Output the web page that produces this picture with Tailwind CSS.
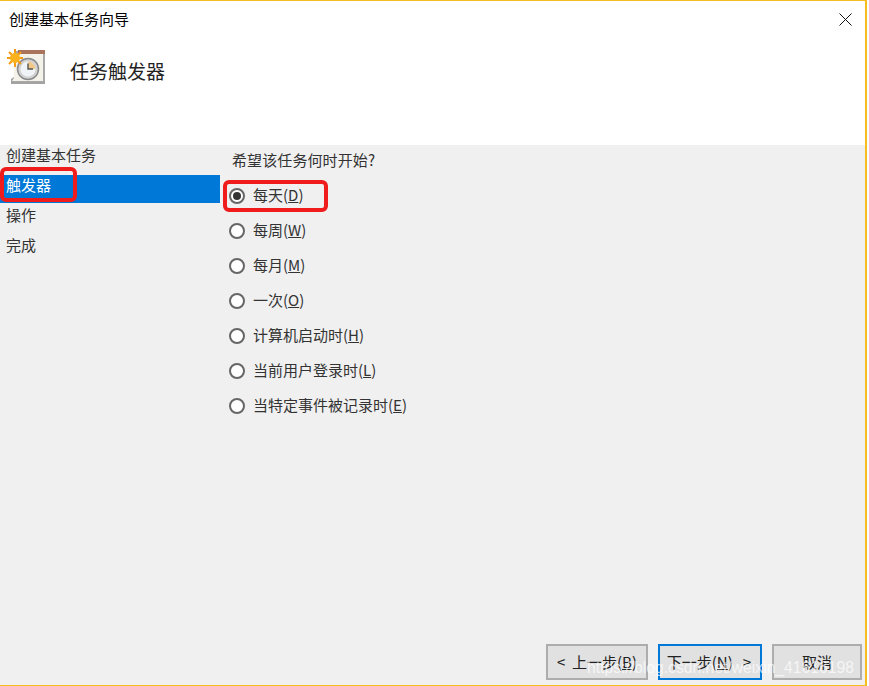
<!DOCTYPE html>
<html lang="zh-CN">
<head>
    <meta charset="UTF-8">
    <meta name="viewport" content="width=device-width, initial-scale=1.0">
    <script src="https://cdn.jsdelivr.net/npm/@tailwindcss/browser@4"></script>
    <title>创建基本任务向导</title>
</head>
<body class="bg-white">
    <div class="relative w-[867px] h-[686px] overflow-hidden flex flex-col bg-[#f0f0f0] font-['Noto_Sans_CJK_SC','Liberation_Sans',sans-serif] text-[15px] text-[#1a1a1a] border-t border-r-2 border-b border-[#f5bd1f]">

        <!-- 标题和页眉 -->
        <header class="h-[144px] shrink-0 bg-white">
            <div class="flex items-center justify-between h-[37px] pl-[9px] pr-[13px]">
                <span class="text-black leading-[35px] -mt-[2px]">创建基本任务向导</span>
                <svg class="w-[13px] h-[13px]" viewBox="0 0 13 13" fill="none" stroke="#111" stroke-width="1"><path d="M.5.5l12 12M12.5.5l-12 12"/></svg>
            </div>
            <div class="flex items-start pl-[6px] pt-[10px]">
                <svg class="w-[40px] h-[40px] shrink-0" viewBox="0 0 40 40">
                    <path d="M5 36V31l3-2h31v7z" fill="#a3a3a3"/>
                    <rect x="8" y="3" width="31" height="31" fill="#a8a8a8"/>
                    <path d="M6 33l2-3V6h29v27z" fill="#f5f2ea"/>
                    <rect x="12" y="2" width="27" height="4" fill="#a9735c"/>
                    <circle cx="22" cy="21" r="10.500" fill="#d2d2d2" stroke="#8a8a8a" stroke-width="1.500"/>
                    <circle cx="22" cy="21" r="7.500" fill="#f1f4f7"/>
                    <path d="M22 13.500a7.500 7.500 0 0 1 7.500 7.500H22z" fill="#f0c98a"/>
                    <path d="M22 15.500V21h5" fill="none" stroke="#555" stroke-width="1.400"/>
                    <g stroke="#f59a12" stroke-width="2">
                        <path d="M9 1v18M1 10h16M3 4l12 12M15 4L3 16"/>
                    </g>
                    <circle cx="9" cy="10" r="5" fill="#fbb21d"/>
                </svg>
                <h1 class="ml-[24px] mt-[13px] text-[19px] leading-[20px] text-[#222] font-normal">任务触发器</h1>
            </div>
        </header>

        <!-- 主体 -->
        <main class="flex flex-1 min-h-0">
            <nav class="w-[220px] shrink-0 text-[#333]">
                <div class="h-[30px] pl-[6px] leading-[19px]">创建基本任务</div>
                <div class="h-[28px] pl-[6px] leading-[19px] bg-[#0078d7] text-white">触发器</div>
                <div class="h-[30px] mt-[1px] pl-[6px] leading-[21px]">操作</div>
                <div class="h-[30px] pl-[6px] leading-[21px]">完成</div>
            </nav>

            <section class="flex-1 pl-[9px] text-[#333]">
                <p class="pl-[3px] h-[28px] leading-[29px] tracking-[0.1px]">希望该任务何时开始?</p>
                <div class="flex flex-col mt-[5px]">
                    <label class="flex items-center h-[35px] gap-[8px]">
                        <span class="flex items-center justify-center w-[16px] h-[16px] rounded-full border-2 border-[#666] bg-white"><span class="w-[8px] h-[8px] rounded-full bg-[#333]"></span></span>
                        <span>每天(<u>D</u>)</span>
                    </label>
                    <label class="flex items-center h-[35px] gap-[8px]">
                        <span class="w-[16px] h-[16px] rounded-full border-2 border-[#666] bg-white"></span>
                        <span>每周(<u>W</u>)</span>
                    </label>
                    <label class="flex items-center h-[35px] gap-[8px]">
                        <span class="w-[16px] h-[16px] rounded-full border-2 border-[#666] bg-white"></span>
                        <span>每月(<u>M</u>)</span>
                    </label>
                    <label class="flex items-center h-[35px] gap-[8px]">
                        <span class="w-[16px] h-[16px] rounded-full border-2 border-[#666] bg-white"></span>
                        <span>一次(<u>O</u>)</span>
                    </label>
                    <label class="flex items-center h-[35px] gap-[8px]">
                        <span class="w-[16px] h-[16px] rounded-full border-2 border-[#666] bg-white"></span>
                        <span>计算机启动时(<u>H</u>)</span>
                    </label>
                    <label class="flex items-center h-[35px] gap-[8px]">
                        <span class="w-[16px] h-[16px] rounded-full border-2 border-[#666] bg-white"></span>
                        <span>当前用户登录时(<u>L</u>)</span>
                    </label>
                    <label class="flex items-center h-[35px] gap-[8px]">
                        <span class="w-[16px] h-[16px] rounded-full border-2 border-[#666] bg-white"></span>
                        <span>当特定事件被记录时(<u>E</u>)</span>
                    </label>
                </div>
            </section>
        </main>

        <!-- 底部按钮 -->
        <footer class="flex justify-end shrink-0 h-[41px] pr-[3px] gap-[10px] text-[#222]">
            <button class="w-[102px] h-[36px] border-2 border-[#adadad] bg-[#e1e1e1]">&lt;&nbsp;&nbsp;上一步(<u>B</u>)</button>
            <button class="w-[104px] h-[36px] pr-[2px] border-2 border-[#0078d7] bg-[#e1e1e1]">下一步(<u>N</u>)&nbsp;&nbsp;&nbsp;&gt;</button>
            <button class="w-[90px] h-[36px] border-2 border-[#adadad] bg-[#e1e1e1]">取消</button>
        </footer>

        <!-- 红色标注框 -->
        <div class="absolute left-[0px] top-[166px] w-[77px] h-[35px] rounded-[6px] border-[4px] border-[#f01c1c]"></div>
        <div class="absolute left-[223px] top-[179px] w-[105px] h-[32px] rounded-[6px] border-[4px] border-[#f01c1c]"></div>

        <!-- 水印 -->
        <div class="absolute left-[587px] top-[655px] font-['Liberation_Sans',sans-serif] text-[15.7px] leading-[24px] whitespace-nowrap text-white/70">https://blog.csdn.net/weixin_41616198</div>
    </div>
</body>
</html>
